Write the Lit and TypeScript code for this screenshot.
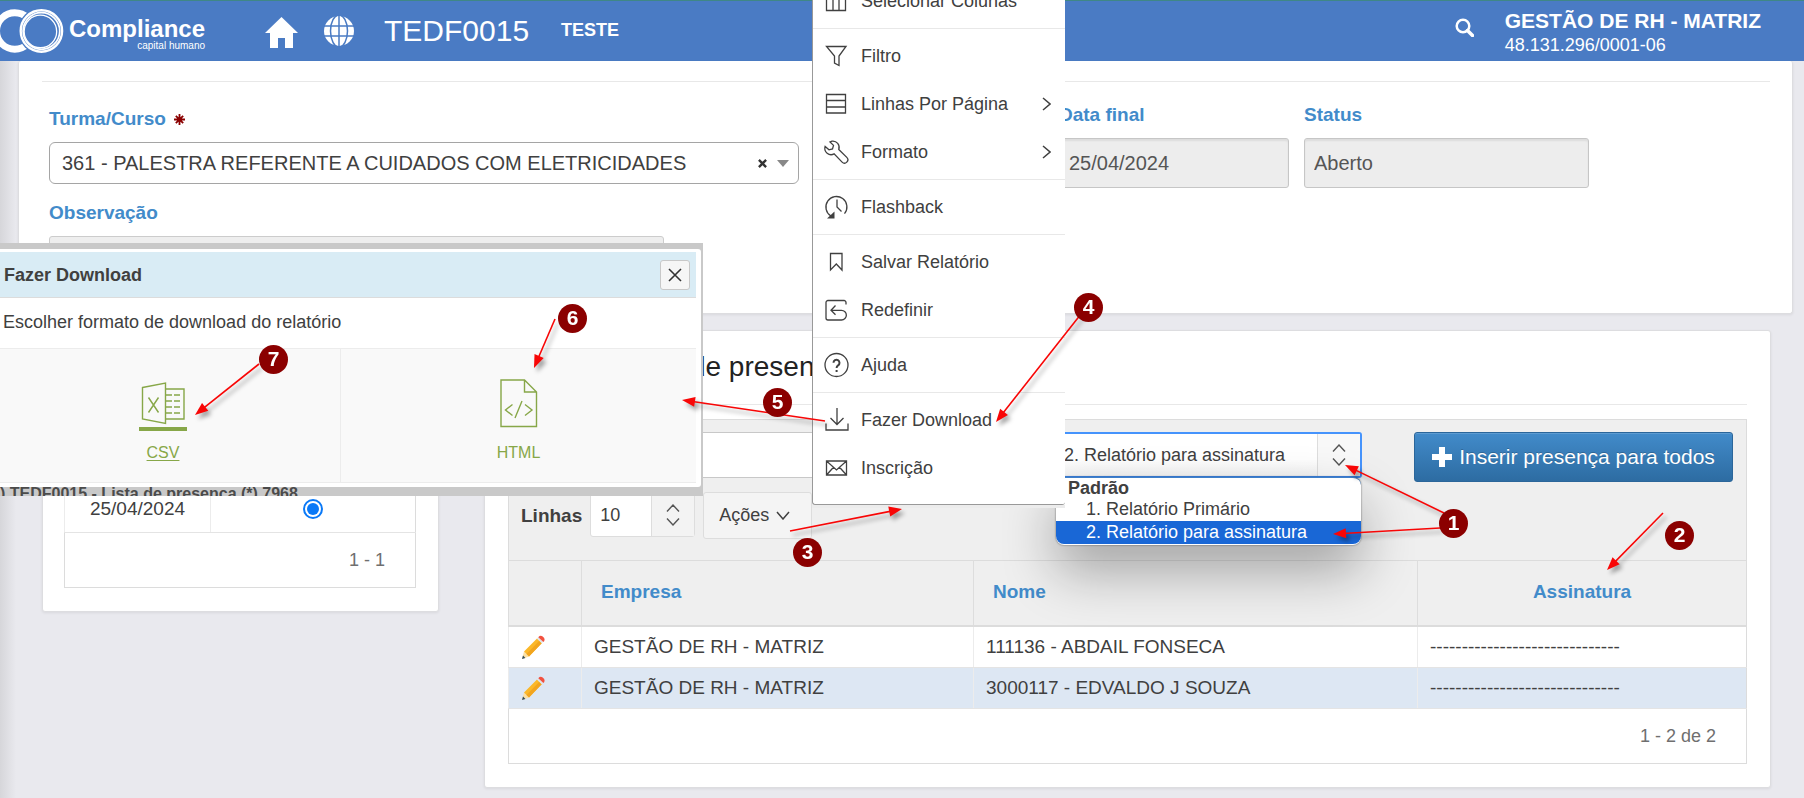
import { LitElement, html, css, svg, nothing } from "lit";
import { customElement, state } from "lit/decorators.js";

interface MenuEntry {
  label: string;
  icon: unknown;
  submenu?: boolean;
  divider?: boolean;
}

interface Arrow {
  from: [number, number];
  to: [number, number];
}

const icons = {
  columns: svg`<path d="M2.5 2.5h19v19h-19zM2.5 7h19M9 7v14.500M15 7v14.500"/>`,
  filter: svg`<path d="M2.500 2.500h19.500l-7 9.500v9.500l-4.500-2.500v-7z"/>`,
  rows: svg`<path d="M2.500 2.500h19v18.500h-19zM2.500 8.500h19M2.500 15h19"/>`,
  wrench: svg`<path d="M8 1.200a6.300 6.300 0 0 1 6.800 8.300l8 7.900a3.300 3.300 0 0 1-4.700 4.700l-8-8.200A6.300 6.300 0 0 1 1.100 6.500L5 9.800l3.500-.9 1-3.500L6 2z"/>`,
  flashback: svg`<path d="M7 21A10.500 10.500 0 1 1 20.500 18.700M13 4.500v7.500l4.500 4.500"/><path d="M3 23.500l7.500-7v7z" fill="#404040" stroke="none"/>`,
  bookmark: svg`<path d="M6.500 3.500h11.500v16.500l-5.700-6-5.800 6z"/>`,
  reset: svg`<path d="M22 6.500v-2a2 2 0 0 0-2-2H4a2 2 0 0 0-2 2v15.500a2 2 0 0 0 2 2h13.500a4.800 4.800 0 0 0 0-9.700H7M11.500 7.500L7 12.300l4.500 4.500"/>`,
  help: svg`<circle cx="12.500" cy="12" r="11.500"/><path d="M9.500 9.800a3 3 0 1 1 4.600 2.500c-1.100.7-1.500 1.100-1.500 2.700" stroke-width="2"/><path d="M12.600 17v2" stroke-width="2"/>`,
  download: svg`<path d="M13 0v16M6.500 10l6.500 6.500 6.500-6.500M2 15.500v6.500h22v-6.500"/>`,
  mail: svg`<path d="M2.500 5h20v14h-20zM2.500 5l10 9 10-9M2.500 19l7-7.700M22.500 19l-7-7.700"/>`,
};

const menuEntries: MenuEntry[] = [
  { label: "Selecionar Colunas", icon: icons.columns, divider: true },
  { label: "Filtro", icon: icons.filter },
  { label: "Linhas Por Página", icon: icons.rows, submenu: true },
  { label: "Formato", icon: icons.wrench, submenu: true, divider: true },
  { label: "Flashback", icon: icons.flashback, divider: true },
  { label: "Salvar Relatório", icon: icons.bookmark },
  { label: "Redefinir", icon: icons.reset, divider: true },
  { label: "Ajuda", icon: icons.help, divider: true },
  { label: "Fazer Download", icon: icons.download },
  { label: "Inscrição", icon: icons.mail },
];

const people = [
  { company: "GESTÃO DE RH - MATRIZ", name: "111136 - ABDAIL FONSECA" },
  { company: "GESTÃO DE RH - MATRIZ", name: "3000117 - EDVALDO J SOUZA" },
];

const arrows: Arrow[] = [
  { from: [1444, 513], to: [1345, 465] },
  { from: [1440, 528], to: [1333, 534] },
  { from: [1663, 513], to: [1607, 570] },
  { from: [790, 531], to: [902, 509] },
  { from: [1081, 314], to: [996, 422] },
  { from: [825, 421], to: [682, 400] },
  { from: [555, 319], to: [534, 368] },
  { from: [259, 364], to: [195, 415] },
];

const markers: [number, number, number][] = [
  [1, 1453, 523],
  [2, 1679, 535],
  [3, 807, 552],
  [4, 1088, 307],
  [5, 777, 402],
  [6, 572, 318],
  [7, 273, 359],
];

const upDown = html`<svg class="updown" viewBox="0 0 14 22" width="14" height="22" aria-hidden="true">
  <path d="M1 7.500l6-6.500 6 6.500M1 14.500l6 6.500 6-6.500" />
</svg>`;

@customElement("page-header")
class PageHeader extends LitElement {
  static styles = css`
    :host {
      display: block;
      color: #fff;
    }
    .bar {
      display: flex;
      align-items: flex-start;
      height: 61px;
      box-sizing: border-box;
      border-top: 1px solid #3f8786;
      background: #4a7bc4;
    }
    .logo {
      display: flex;
      width: 206px;
      height: 60px;
    }
    .rings {
      flex: none;
      width: 69px;
    }
    .brand {
      display: flex;
      flex-direction: column;
      align-items: flex-end;
      padding-top: 16px;
      font-weight: bold;
      font-size: 24px;
      line-height: 24px;
    }
    .brand small {
      font-size: 10px;
      line-height: 10px;
      font-weight: normal;
    }
    a {
      color: inherit;
      text-decoration: none;
    }
    .home {
      margin: 16px 0 0 59px;
    }
    .globe {
      margin: 15px 0 0 26px;
    }
    svg {
      display: block;
    }
    h1 {
      margin: 0 0 0 30px;
      font-size: 30px;
      line-height: 60px;
      font-weight: normal;
    }
    .env {
      margin-left: 32px;
      font-size: 18px;
      line-height: 58px;
      font-weight: bold;
    }
    .search {
      margin: 17px 31px 0 auto;
      padding: 0;
      border: 0;
      background: none;
      color: inherit;
    }
    .company {
      margin-right: 43px;
      padding-top: 8px;
      font-size: 18px;
      line-height: 24px;
    }
    .company strong {
      display: block;
      font-size: 21px;
    }
  `;

  render() {
    return html`<header class="bar">
      <a class="logo" href="#" aria-label="Compliance capital humano">
        <svg class="rings" viewBox="0 1 70 60" height="60" aria-hidden="true">
          <circle cx="15" cy="31" r="18.500" fill="none" stroke="#fff" stroke-width="7" />
          <circle cx="42" cy="31" r="23.500" fill="#4a7bc4" />
          <g fill="none" stroke="#fff">
            <circle cx="42" cy="31" r="21" stroke-width="2.400" />
            <circle cx="42" cy="31" r="18.600" stroke-width="1.700" />
            <circle cx="41" cy="31.500" r="16.500" stroke-width="1.300" />
          </g>
        </svg>
        <span class="brand">Compliance<small>capital humano</small></span>
      </a>
      <a class="home" href="#" aria-label="Início">
        <svg viewBox="0 0 33 31" width="33" height="31" fill="#fff">
          <path d="M16.500 0L33 16h-5v15h-8V21h-7v10H5V16H0z" />
        </svg>
      </a>
      <a class="globe" href="#" aria-label="Idioma">
        <svg viewBox="0 0 30 30" width="30" height="30">
          <circle cx="15" cy="15" r="15" fill="#fff" />
          <g fill="none" stroke="#4a7bc4" stroke-width="1.500">
            <path d="M0 10h30M0 20h30M15 0v30" />
            <ellipse cx="15" cy="15" rx="8.500" ry="16" />
          </g>
        </svg>
      </a>
      <h1>TEDF0015</h1>
      <span class="env">TESTE</span>
      <button class="search" aria-label="Pesquisar">
        <svg viewBox="0 0 19 19" width="19" height="19" fill="none" stroke="#fff">
          <circle cx="8" cy="8" r="6.300" stroke-width="2.500" />
          <path d="M12.500 12.500l5 5" stroke-width="3.500" stroke-linecap="round" />
        </svg>
      </button>
      <div class="company"><strong>GESTÃO DE RH - MATRIZ</strong>48.131.296/0001-06</div>
    </header>`;
  }
}

@customElement("actions-menu")
class ActionsMenu extends LitElement {
  static styles = css`
    :host {
      display: block;
      box-sizing: border-box;
      width: 253px;
      background: #fff;
      border-bottom: 3px solid #ececec;
    }
    .list {
      margin: 0;
      padding: 0 0 12px;
      list-style: none;
      border-left: 1px solid #999;
      border-bottom: 1px solid #999;
      border-radius: 0 0 3px 3px;
    }
    .divider {
      padding-bottom: 3px;
      margin-bottom: 3px;
      border-bottom: 1px solid #e8e8e8;
    }
    button {
      display: flex;
      align-items: center;
      width: 100%;
      height: 48px;
      padding: 0 14px 0 11px;
      border: 0;
      background: none;
      font: 18px/24px "Liberation Sans", Arial, sans-serif;
      color: #404040;
      text-align: left;
    }
    .icon {
      flex: none;
      margin-right: 12px;
      fill: none;
      stroke: #404040;
      stroke-width: 1.300;
      overflow: visible;
    }
    .label {
      flex: 1;
    }
    .more {
      fill: none;
      stroke: #404040;
      stroke-width: 1.500;
    }
  `;

  render() {
    return html`<ul class="list" role="menu">
      ${menuEntries.map(
        (e) => html`<li class=${e.divider ? "divider" : "item"} role="none">
          <button role="menuitem">
            <svg class="icon" viewBox="0 0 25 24" width="25" height="24" aria-hidden="true">${e.icon}</svg>
            <span class="label">${e.label}</span>
            ${e.submenu
              ? html`<svg class="more" viewBox="0 0 9 14" width="9" height="14"><path d="M1 1l7 6-7 6" /></svg>`
              : nothing}
          </button>
        </li>`
      )}
    </ul>`;
  }
}

@customElement("download-dialog")
class DownloadDialog extends LitElement {
  static styles = css`
    :host {
      display: block;
      width: 717px;
      color: #404040;
      font-size: 18px;
    }
    .frame {
      background: #c9c9c9;
      padding: 6px 2px 0 0;
    }
    .panel {
      background: #fff;
      padding: 3px 5px 4px 0;
      border-radius: 0 3px 3px 0;
    }
    .head {
      display: flex;
      align-items: center;
      justify-content: space-between;
      height: 46px;
      box-sizing: border-box;
      padding: 0 6px 0 18px;
      background: #d9ecf5;
      border-bottom: 1px solid #dcdcdc;
    }
    h2 {
      margin: 0;
      font-size: 18px;
      line-height: 24px;
    }
    .close {
      display: grid;
      place-items: center;
      width: 30px;
      height: 30px;
      padding: 0;
      border: 1px solid #c8c8c8;
      border-radius: 3px;
      background: #f6f6f6;
    }
    p {
      margin: 0;
      padding: 0 17px 1px;
      line-height: 49px;
    }
    .formats {
      display: grid;
      grid-template-columns: 354px 1fr;
      background: #f9f9f9;
      border-top: 1px solid #ececec;
      border-bottom: 1px solid #ececec;
    }
    .format {
      display: flex;
      flex-direction: column;
      align-items: center;
      height: 133px;
      box-sizing: border-box;
      padding-top: 30px;
      color: #87a748;
      font-size: 16px;
      line-height: 24px;
      text-decoration: none;
    }
    .format + .format {
      border-left: 1px solid #ececec;
    }
    .format svg {
      fill: none;
      stroke: #87a748;
      stroke-width: 1.400;
      margin-bottom: 10px;
      overflow: visible;
    }
    .current {
      text-decoration: underline;
      text-underline-offset: 2px;
    }
    .strip {
      height: 9px;
      overflow: hidden;
      padding-left: 14px;
      background: #c9c9c9;
      color: #4b4b4b;
      font-size: 16px;
      line-height: 14px;
      font-weight: bold;
      white-space: pre;
    }
  `;

  render() {
    return html`<section role="dialog" aria-labelledby="title">
      <div class="frame">
        <div class="panel">
          <div class="head">
            <h2 id="title">Fazer Download</h2>
            <button class="close" aria-label="Fechar">
              <svg viewBox="0 0 14 14" width="14" height="14" fill="none" stroke="#333" stroke-width="1.600">
                <path d="M1 1l12 12M13 1L1 13" />
              </svg>
            </button>
          </div>
          <p>Escolher formato de download do relatório</p>
          <div class="formats">
            <a class="format current" href="#">
              <svg viewBox="0 0 48 52" width="48" height="52" aria-hidden="true">
                <path d="M3.500 8.500l23-4.500v40.500l-23-4.500zM26.500 10h18.500v30H26.500M9.500 18.500l10 15M19.500 18.500l-10 15" />
                <path d="M27 16h6M35 16h6M27 22h6M35 22h6M27 28h6M35 28h6M27 34h6M35 34h6" />
                <path d="M0 50h48" stroke-width="4" />
              </svg>
              CSV
            </a>
            <a class="format" href="#">
              <svg viewBox="0 0 48 52" width="48" height="52" aria-hidden="true">
                <path d="M6 1h23.500l12 12v34.500H6zM29.500 1v12h12M17.500 25.500l-7 5.500 7 5.500M30 25.500l7 5.500-7 5.500M27 22l-7 17" />
              </svg>
              HTML
            </a>
          </div>
        </div>
      </div>
      <div class="strip">) TEDF0015 - Lista de presença (*) 7968</div>
    </section>`;
  }
}

@customElement("tutorial-notes")
class TutorialNotes extends LitElement {
  static styles = css`
    :host {
      display: block;
      pointer-events: none;
    }
    .canvas {
      display: block;
      overflow: visible;
      filter: drop-shadow(3px 4px 2px rgba(0, 0, 0, 0.35));
    }
    .line {
      stroke: #f80606;
      stroke-width: 1.600;
    }
    .tip {
      fill: #f80606;
    }
    .mark {
      position: absolute;
      width: 29px;
      height: 29px;
      margin: -14px 0 0 -14px;
      border-radius: 50%;
      background: #8b0000;
      color: #fff;
      font-size: 21px;
      line-height: 27px;
      font-weight: bold;
      text-align: center;
    }
  `;

  render() {
    return html`<svg class="canvas" width="1" height="1" aria-hidden="true">
        ${arrows.map(({ from, to }) => {
          const angle = (Math.atan2(to[1] - from[1], to[0] - from[0]) * 180) / Math.PI;
          return svg`<line class="line" x1=${from[0]} y1=${from[1]} x2=${to[0] + (from[0] - to[0]) * 0.05} y2=${to[1] + (from[1] - to[1]) * 0.05}></line>
            <path class="tip" d="M0 0L-13 -5V5z" transform="translate(${to[0]} ${to[1]}) rotate(${angle})"></path>`;
        })}
      </svg>
      ${markers.map(([n, x, y]) => html`<span class="mark" style="left:${x}px;top:${y}px">${n}</span>`)}`;
  }
}

@customElement("app-root")
class AppRoot extends LitElement {
  @state() private report = "2";

  static styles = css`
    :host {
      display: block;
      position: relative;
      min-height: 100vh;
      overflow: hidden;
      background: linear-gradient(90deg, #d6d6da, rgba(233, 233, 238, 0) 16px), #e9e9ee;
      font-family: "Liberation Sans", Arial, sans-serif;
      font-size: 19px;
      color: #404040;
    }
    .card {
      box-sizing: border-box;
      background: #fff;
      border: 1px solid #dddde0;
      border-radius: 3px;
      box-shadow: 0 1px 3px rgba(0, 0, 0, 0.07);
    }
    .course {
      height: 253px;
      margin: 0 11px 0 18px;
      padding: 20px 22px 0 23px;
      border-top: 0;
      overflow: hidden;
    }
    .rule {
      margin: 0;
      border: 0;
      border-top: 1px solid #e8e8e8;
    }
    .fields {
      display: flex;
      padding-left: 7px;
    }
    .main-field {
      flex: 0 1 750px;
      margin-right: 260px;
      padding-top: 25px;
    }
    .field {
      padding-top: 21px;
      margin-right: 15px;
    }
    .label {
      display: flex;
      align-items: center;
      gap: 8px;
      height: 24px;
      margin-bottom: 11px;
      color: #428bca;
      font-weight: bold;
      line-height: 24px;
    }
    .combo {
      display: grid;
      align-items: center;
    }
    .combo > * {
      grid-area: 1 / 1;
    }
    select,
    input,
    textarea,
    button {
      font-family: inherit;
      color: inherit;
      box-sizing: border-box;
      margin: 0;
    }
    select {
      appearance: none;
      width: 100%;
      outline: 0;
      background: #fff;
    }
    .picker {
      height: 42px;
      padding: 0 60px 0 12px;
      border: 1px solid #a5a5a5;
      border-radius: 6px;
      font-size: 20px;
      margin-bottom: 17px;
    }
    .tools {
      display: flex;
      align-items: center;
      gap: 10px;
      justify-self: end;
      margin: 0 10px 17px 0;
    }
    .clear {
      display: flex;
      padding: 0;
      border: 0;
      background: none;
    }
    .notes {
      display: block;
      width: 615px;
      height: 70px;
      border: 1px solid #ccc;
      border-radius: 3px;
      background: #eee;
      resize: none;
    }
    .readonly {
      display: block;
      width: 285px;
      height: 50px;
      padding: 0 9px;
      border: 1px solid #c6c6c6;
      border-radius: 3px;
      background: #ededed;
      box-shadow: inset 0 2px 2px rgba(0, 0, 0, 0.07);
      color: #555;
      font-size: 20px;
    }
    .date {
      width: 230px;
    }
    .columns {
      display: flex;
      align-items: flex-start;
      gap: 45px;
      padding: 16px 33px 10px 42px;
    }
    .sessions {
      flex: 0 0 397px;
      padding: 155px 22px 23px 21px;
    }
    .presence {
      flex: 1;
      padding: 17px 23px 23px 23px;
    }
    h2 {
      margin: 0 0 19px;
      padding-left: 115px;
      font-size: 28px;
      line-height: 37px;
      font-weight: normal;
      color: #222;
    }
    .toolbar {
      margin-top: 14px;
      padding: 12px 13px 20px 12px;
      border: 1px solid #dcdcdc;
      border-bottom: 0;
      background: #efefef;
    }
    .row {
      display: flex;
      align-items: flex-start;
      gap: 8px;
    }
    .row + .row {
      margin-top: 10px;
    }
    .search {
      flex: 1;
      min-width: 0;
      height: 46px;
      border: 1px solid #c8c8c8;
      border-radius: 2px;
      background: #fff;
    }
    .report {
      position: relative;
      flex: none;
      width: 308px;
      margin: 0 44px 0 16px;
    }
    .report-select {
      height: 46px;
      padding: 0 44px 0 8px;
      border: 2px solid #4593fc;
      border-radius: 3px;
      background: linear-gradient(#fff 60%, #f3f3f3);
      font-size: 18px;
    }
    .stepper {
      display: grid;
      place-items: center;
      justify-self: end;
      width: 42px;
      height: 42px;
      margin-right: 2px;
      border-left: 1px solid #ddd;
      background: #f8f8f8;
      pointer-events: none;
    }
    .updown {
      fill: none;
      stroke: #555;
      stroke-width: 1.400;
    }
    .options {
      position: absolute;
      z-index: 1;
      left: 2px;
      top: 45px;
      width: 305px;
      margin: 0;
      padding: 0 0 1px;
      list-style: none;
      background: #fff;
      border-top: 1px solid #3f7fc8;
      border-radius: 0 8px 8px 8px;
      box-shadow: 0 0 2px rgba(0, 0, 0, 0.6), 0 26px 54px rgba(0, 0, 0, 0.32);
      font-size: 18px;
    }
    .group {
      padding-left: 12px;
      line-height: 20px;
      font-weight: bold;
    }
    .option {
      padding-left: 30px;
      line-height: 23px;
    }
    .selected {
      background: #1967d6;
      color: #fff;
      border-radius: 0 0 8px 8px;
    }
    .primary {
      display: flex;
      align-items: center;
      justify-content: center;
      gap: 7px;
      flex: none;
      width: 319px;
      height: 50px;
      padding: 0;
      border: 1px solid #2b669a;
      border-radius: 3px;
      background: linear-gradient(#428bca, #2d6ca2);
      box-shadow: inset 0 1px 0 rgba(255, 255, 255, 0.15);
      color: #fff;
      font-size: 21px;
      text-shadow: 0 -1px 0 rgba(0, 0, 0, 0.2);
    }
    .rows-label {
      font-weight: bold;
      line-height: 48px;
    }
    .rows {
      width: 105px;
    }
    .rows-select {
      height: 45px;
      padding: 0 44px 0 9px;
      border: 1px solid #ddd;
      border-radius: 3px;
      font-size: 18px;
    }
    .rows-step {
      margin-right: 1px;
      background: #f3f3f3;
    }
    .actions {
      display: flex;
      align-items: center;
      gap: 7px;
      width: 109px;
      height: 47px;
      padding: 0 15px;
      border: 1px solid #ddd;
      border-radius: 3px;
      background: #f4f4f4;
      font-size: 18px;
    }
    table {
      width: 100%;
      border-collapse: collapse;
      table-layout: fixed;
      border: 1px solid #dcdcdc;
    }
    th {
      height: 62px;
      padding: 0 19px 2px;
      border-left: 1px solid #ddd;
      border-bottom: 2px solid #dcdcdc;
      background: #efefef;
      color: #428bca;
      text-align: left;
    }
    .center {
      text-align: center;
    }
    td {
      height: 40px;
      padding: 0 12px;
      line-height: 24px;
      border-left: 1px solid #ececec;
      border-bottom: 1px solid #e4e4e4;
    }
    .hover td {
      background: #dde7f3;
    }
    .pencil {
      display: flex;
    }
    .pager td {
      height: 54px;
      padding: 0 30px;
      border: 0;
      color: #6f6f6f;
      font-size: 18px;
      text-align: right;
    }
    .session td {
      height: 43px;
      padding-bottom: 2px;
      text-align: center;
    }
    .check {
      appearance: none;
      display: inline-block;
      vertical-align: middle;
      width: 20px;
      height: 20px;
      border: 2px solid #0a79f7;
      border-radius: 50%;
      background: #0a79f7;
      background-clip: content-box;
      padding: 2px;
    }
    .menu {
      position: absolute;
      z-index: 2;
      left: 812px;
      top: -23px;
    }
    .dialog {
      position: absolute;
      z-index: 3;
      left: -14px;
      top: 243px;
    }
    .annotations {
      position: absolute;
      z-index: 4;
      left: 0;
      top: 0;
    }
  `;

  private renderPencil() {
    return html`<a class="pencil" href="#" aria-label="Editar">
      <svg viewBox="0 0 24 24" width="24" height="24">
        <path d="M1 24l2-7.500 5 5z" fill="#fbe0a4" />
        <path d="M1 24l1-3.500 2.400 2.400z" fill="#2f4a5c" />
        <path d="M3 16.500L16 3.500l4.700 4.800L8 21.500z" fill="#fbb829" />
        <path d="M5.500 19L18.300 5.800l2.400 2.500L8 21.500z" fill="#f2a51e" />
        <path d="M16 3.500l1.500-1.500 4.700 4.800L20.700 8.300z" fill="#dfe3e6" />
        <path d="M17.300 2.200q2-2.400 4.400-.6l1 1q1.900 2.300-.3 4.400z" fill="#f2513f" />
      </svg>
    </a>`;
  }

  private renderCourse() {
    return html`<section class="card course">
      <hr class="rule" />
      <div class="fields">
        <div class="main-field">
          <label class="label" for="course">
            Turma/Curso
            <svg viewBox="0 0 12 12" width="11" height="11" aria-hidden="true">
              <path d="M6 0v12M0 6h12M2 2l8 8M10 2l-8 8" stroke="#8b0000" stroke-width="2" />
            </svg>
          </label>
          <div class="combo">
            <select class="picker" id="course">
              <option>361 - PALESTRA REFERENTE A CUIDADOS COM ELETRICIDADES</option>
            </select>
            <span class="tools">
              <button class="clear" aria-label="Limpar">
                <svg viewBox="0 0 10 10" width="9" height="9" stroke="#333" stroke-width="2.600">
                  <path d="M1 1l8 8M9 1L1 9" />
                </svg>
              </button>
              <svg viewBox="0 0 12 7" width="12" height="7" fill="#888"><path d="M0 0h12L6 7z" /></svg>
            </span>
          </div>
          <label class="label" for="notes">Observação</label>
          <textarea class="notes" id="notes" readonly></textarea>
        </div>
        <div class="field">
          <label class="label" for="end">Data final</label>
          <input class="readonly date" id="end" value="25/04/2024" readonly />
        </div>
        <div class="field">
          <label class="label" for="status">Status</label>
          <input class="readonly" id="status" value="Aberto" readonly />
        </div>
      </div>
    </section>`;
  }

  private renderSessions() {
    return html`<section class="card sessions">
      <table>
        <colgroup><col style="width:146px" /><col /></colgroup>
        <tbody>
          <tr class="session">
            <td>25/04/2024</td>
            <td><input class="check" type="radio" name="session" aria-label="25/04/2024" checked /></td>
          </tr>
          <tr class="pager"><td colspan="2">1 - 1</td></tr>
        </tbody>
      </table>
    </section>`;
  }

  private renderToolbar() {
    const option = (value: string, text: string) => html`<li
      class="option ${this.report === value ? "selected" : ""}"
      role="option"
      aria-selected=${this.report === value}
      @click=${() => (this.report = value)}
    >${text}</li>`;
    return html`<div class="toolbar">
      <div class="row">
        <input class="search" type="search" aria-label="Pesquisar" />
        <div class="report">
          <div class="combo">
            <select class="report-select" aria-label="Relatórios" .value=${this.report}>
              <option value="1">1. Relatório Primário</option>
              <option value="2" selected>2. Relatório para assinatura</option>
            </select>
            <span class="stepper">${upDown}</span>
          </div>
          <ul class="options" role="listbox">
            <li class="group" role="presentation">Padrão</li>
            ${option("1", "1. Relatório Primário")} ${option("2", "2. Relatório para assinatura")}
          </ul>
        </div>
        <button class="primary">
          <svg viewBox="0 0 20 20" width="20" height="20" fill="#fff"><path d="M7 0h6v7h7v6h-7v7H7v-7H0V7h7z" /></svg>
          Inserir presença para todos
        </button>
      </div>
      <div class="row">
        <label class="rows-label" for="rows">Linhas</label>
        <div class="combo rows">
          <select class="rows-select" id="rows"><option>10</option></select>
          <span class="stepper rows-step">${upDown}</span>
        </div>
        <button class="actions">
          Ações
          <svg viewBox="0 0 14 9" width="14" height="9" fill="none" stroke="#404040" stroke-width="1.500">
            <path d="M1 1l6 7 6-7" />
          </svg>
        </button>
      </div>
    </div>`;
  }

  private renderPresence() {
    return html`<section class="card presence">
      <h2>Lista de presença</h2>
      <hr class="rule" />
      ${this.renderToolbar()}
      <table>
        <colgroup>
          <col style="width:73px" />
          <col style="width:392px" />
          <col style="width:444px" />
          <col />
        </colgroup>
        <thead>
          <tr><th></th><th>Empresa</th><th>Nome</th><th class="center">Assinatura</th></tr>
        </thead>
        <tbody>
          ${people.map(
            (p, i) => html`<tr class=${i === 1 ? "hover" : ""}>
              <td>${this.renderPencil()}</td>
              <td>${p.company}</td>
              <td>${p.name}</td>
              <td>${"-".repeat(30)}</td>
            </tr>`
          )}
          <tr class="pager"><td colspan="4">1 - 2 de 2</td></tr>
        </tbody>
      </table>
    </section>`;
  }

  render() {
    return html`<page-header></page-header>
      <main>
        ${this.renderCourse()}
        <div class="columns">${this.renderSessions()} ${this.renderPresence()}</div>
      </main>
      <actions-menu class="menu"></actions-menu>
      <download-dialog class="dialog"></download-dialog>
      <tutorial-notes class="annotations"></tutorial-notes>`;
  }
}
